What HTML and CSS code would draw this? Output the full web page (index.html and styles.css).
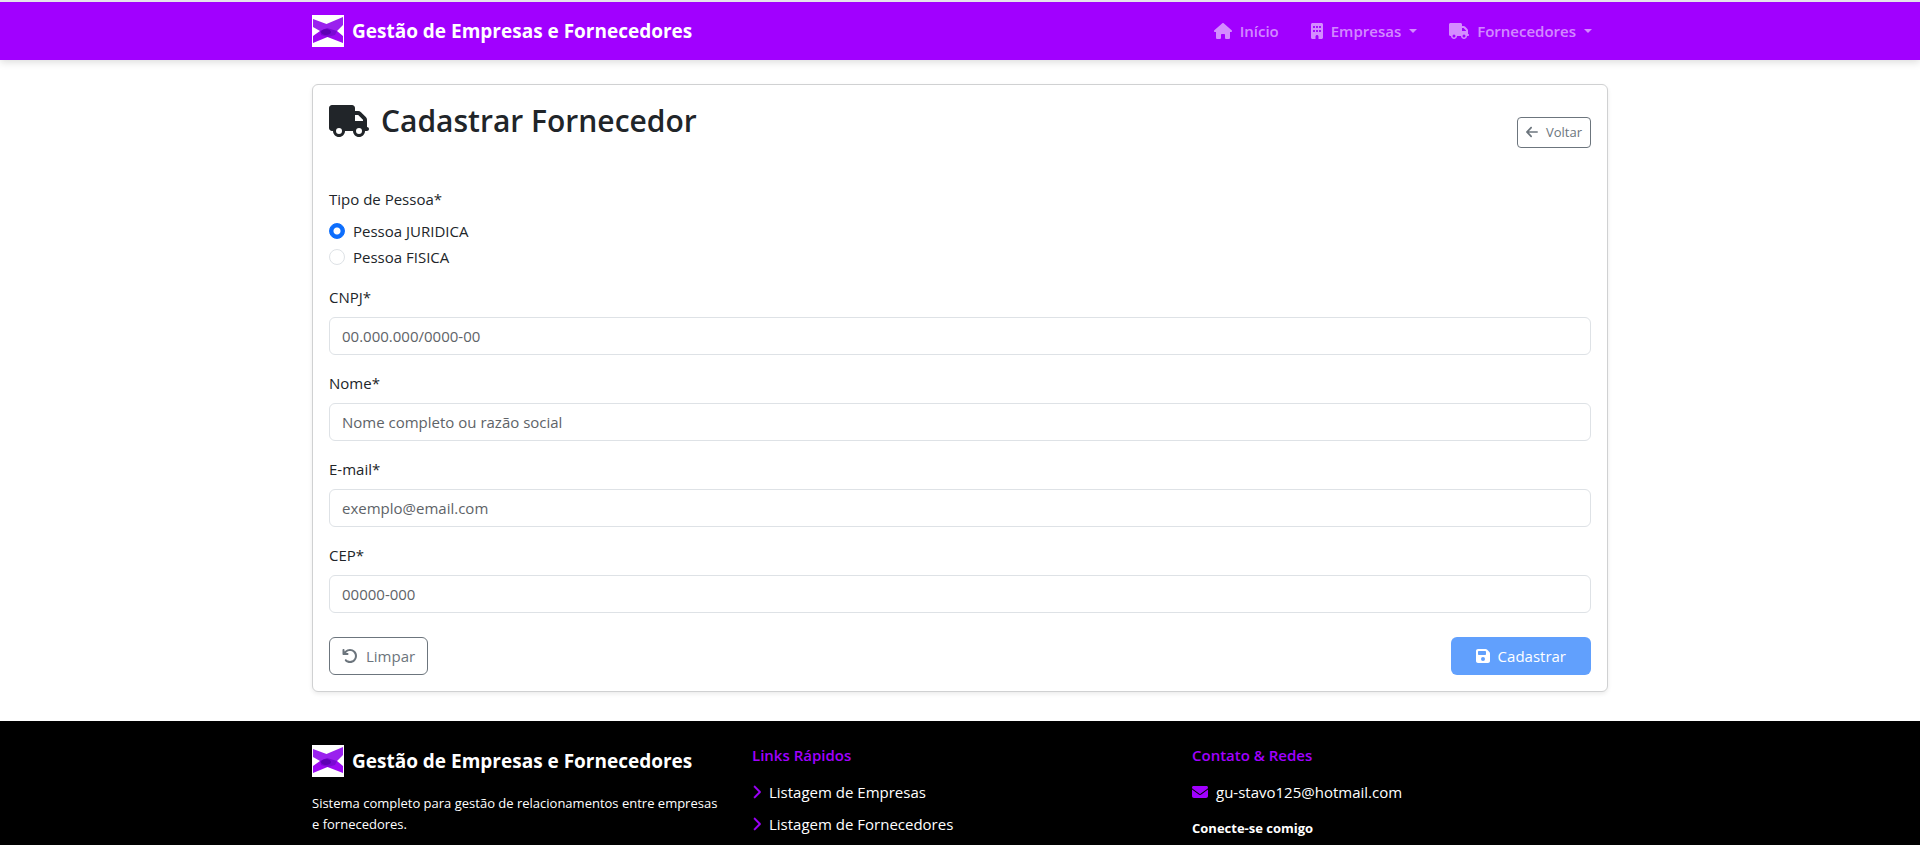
FILE: index.html
```html
<!DOCTYPE html>
<html lang="pt-BR">
<head>
<meta charset="utf-8">
<meta name="viewport" content="width=device-width, initial-scale=1">
<title>Gestão de Empresas e Fornecedores</title>
<link rel="stylesheet" href="styles.css">
</head>
<body>
<svg class="sprite" aria-hidden="true">
  <symbol id="truck" viewBox="0 0 640 512"><path d="M48 0C21.5 0 0 21.5 0 48V368c0 26.5 21.5 48 48 48H64c0 53 43 96 96 96s96-43 96-96H384c0 53 43 96 96 96s96-43 96-96h32c17.7 0 32-14.3 32-32s-14.3-32-32-32V288 256 237.3c0-17-6.7-33.3-18.7-45.3L512 114.7c-12-12-28.3-18.7-45.3-18.7H416V48c0-26.5-21.5-48-48-48H48zM416 160h50.7L544 237.3V256H416V160zM112 416a48 48 0 1 1 96 0 48 48 0 1 1 -96 0zm368-48a48 48 0 1 1 0 96 48 48 0 1 1 0-96z"/></symbol>
  <symbol id="house" viewBox="0 0 576 512"><path d="M575.8 255.5c0 18-15 32.1-32 32.1h-32l.7 160.2c0 2.7-.2 5.4-.5 8.1V472c0 22.1-17.9 40-40 40H456c-1.1 0-2.2 0-3.3-.1c-1.4 .1-2.8 .1-4.2 .1H416 392c-22.1 0-40-17.9-40-40V448 384c0-17.7-14.3-32-32-32H256c-17.7 0-32 14.3-32 32v64 24c0 22.1-17.9 40-40 40H160 128.1c-1.5 0-3-.1-4.5-.2c-1.2 .1-2.4 .2-3.6 .2H104c-22.1 0-40-17.9-40-40V360c0-.9 0-1.9 .1-2.8V287.6H32c-18 0-32-14-32-32.1c0-9 3-17 10-24L266.4 8c7-7 15-8 22-8s15 2 21 7L564.8 231.5c8 7 12 15 11 24z"/></symbol>
  <symbol id="building" viewBox="0 0 384 512"><path d="M48 0C21.5 0 0 21.5 0 48V464c0 26.5 21.5 48 48 48h96V432c0-26.5 21.5-48 48-48s48 21.5 48 48v80h96c26.5 0 48-21.5 48-48V48c0-26.5-21.5-48-48-48H48zM64 240c0-8.8 7.2-16 16-16h32c8.8 0 16 7.2 16 16v32c0 8.8-7.2 16-16 16H80c-8.8 0-16-7.2-16-16V240zm112-16h32c8.8 0 16 7.2 16 16v32c0 8.8-7.2 16-16 16H176c-8.8 0-16-7.2-16-16V240c0-8.8 7.2-16 16-16zm80 16c0-8.8 7.2-16 16-16h32c8.8 0 16 7.2 16 16v32c0 8.8-7.2 16-16 16H272c-8.8 0-16-7.2-16-16V240zM80 96h32c8.8 0 16 7.2 16 16v32c0 8.8-7.2 16-16 16H80c-8.8 0-16-7.2-16-16V112c0-8.8 7.2-16 16-16zm80 16c0-8.8 7.2-16 16-16h32c8.8 0 16 7.2 16 16v32c0 8.8-7.2 16-16 16H176c-8.8 0-16-7.2-16-16V112zM272 96h32c8.8 0 16 7.2 16 16v32c0 8.8-7.2 16-16 16H272c-8.8 0-16-7.2-16-16V112c0-8.8 7.2-16 16-16z"/></symbol>
  <symbol id="arrow-left" viewBox="0 0 448 512"><path d="M9.4 233.4c-12.5 12.5-12.5 32.8 0 45.3l160 160c12.5 12.5 32.8 12.5 45.3 0s12.5-32.8 0-45.3L109.2 288 416 288c17.7 0 32-14.3 32-32s-14.3-32-32-32l-306.7 0L214.6 118.6c12.5-12.5 12.5-32.8 0-45.3s-32.8-12.5-45.3 0l-160 160z"/></symbol>
  <symbol id="undo" viewBox="0 0 512 512"><path d="M125.7 160H176c17.7 0 32 14.3 32 32s-14.3 32-32 32H48c-17.7 0-32-14.3-32-32V64c0-17.7 14.3-32 32-32s32 14.3 32 32v51.2L97.6 97.6c87.5-87.5 229.3-87.5 316.8 0s87.5 229.3 0 316.8s-229.3 87.5-316.8 0c-12.5-12.5-12.5-32.8 0-45.3s32.8-12.5 45.3 0c62.5 62.5 163.8 62.5 226.3 0s62.5-163.8 0-226.3s-163.8-62.5-226.3 0L125.7 160z"/></symbol>
  <symbol id="save" viewBox="0 0 448 512"><path d="M64 32C28.7 32 0 60.7 0 96V416c0 35.3 28.7 64 64 64H384c35.3 0 64-28.7 64-64V173.3c0-17-6.7-33.3-18.7-45.3L352 50.7C340 38.7 323.7 32 306.7 32H64zm0 96c0-17.7 14.3-32 32-32H288c17.7 0 32 14.3 32 32v64c0 17.7-14.3 32-32 32H96c-17.7 0-32-14.3-32-32V128zM224 288a64 64 0 1 1 0 128 64 64 0 1 1 0-128z"/></symbol>
  <symbol id="chevron" viewBox="0 0 320 512"><path stroke="currentColor" stroke-width="16" d="M310.6 233.4c12.5 12.5 12.5 32.8 0 45.3l-192 192c-12.5 12.5-32.8 12.5-45.3 0s-12.5-32.8 0-45.3L242.7 256 73.4 86.6c-12.5-12.5-12.5-32.8 0-45.3s32.8-12.5 45.3 0l192 192z"/></symbol>
  <symbol id="envelope" viewBox="0 0 512 512"><path d="M48 64C21.5 64 0 85.5 0 112c0 15.1 7.1 29.3 19.2 38.4L236.8 313.6c11.4 8.5 27 8.5 38.4 0L492.8 150.4c12.1-9.1 19.2-23.3 19.2-38.4c0-26.5-21.5-48-48-48H48zM0 176V384c0 35.3 28.7 64 64 64H448c35.3 0 64-28.7 64-64V176L294.4 339.2c-22.8 17.1-54 17.1-76.8 0L0 176z"/></symbol>
  <symbol id="logo" viewBox="0 0 32 32">
    <rect width="32" height="32" fill="#fff"/>
    <path d="M1 4 14.500 9 31 2V10L25 16H8L1 12z" fill="#9a22ee"/>
    <path d="M8 16H25L31 21V28L15.500 22 1 28V21z" fill="#9c08f2"/>
    <path d="M8 16 15 13 25 16 23 20 15.500 22 9 20z" fill="#7a08d4"/>
    <ellipse cx="14" cy="17" rx="5" ry="3" fill="#5f02b4"/>
  </symbol>
</svg>

<header class="navbar">
  <div class="container navbar-inner">
    <a class="brand" href="#"><svg class="logo" aria-hidden="true"><use href="#logo"/></svg>Gestão de Empresas e Fornecedores</a>
    <nav class="nav">
      <a class="nav-link" href="#"><svg class="icon icon-house" aria-hidden="true"><use href="#house"/></svg>Início</a>
      <a class="nav-link dropdown" href="#"><svg class="icon icon-building" aria-hidden="true"><use href="#building"/></svg>Empresas</a>
      <a class="nav-link dropdown" href="#"><svg class="icon icon-truck" aria-hidden="true"><use href="#truck"/></svg>Fornecedores</a>
    </nav>
  </div>
</header>

<main class="container main">
  <section class="card">
    <div class="card-head">
      <h1 class="title"><svg class="title-icon" aria-hidden="true"><use href="#truck"/></svg>Cadastrar Fornecedor</h1>
      <a class="btn btn-outline btn-small" href="#"><svg class="icon-small" aria-hidden="true"><use href="#arrow-left"/></svg>Voltar</a>
    </div>
    <form class="form">
      <fieldset class="group">
        <legend class="label">Tipo de Pessoa*</legend>
        <div class="checks">
          <div class="check"><input class="radio" type="radio" name="tipo" id="juridica" checked><label for="juridica">Pessoa JURIDICA</label></div>
          <div class="check"><input class="radio" type="radio" name="tipo" id="fisica"><label for="fisica">Pessoa FISICA</label></div>
        </div>
      </fieldset>
      <div class="group">
        <label class="label" for="cnpj">CNPJ*</label>
        <input class="control" type="text" id="cnpj" placeholder="00.000.000/0000-00">
      </div>
      <div class="group">
        <label class="label" for="nome">Nome*</label>
        <input class="control" type="text" id="nome" placeholder="Nome completo ou razão social">
      </div>
      <div class="group">
        <label class="label" for="email">E-mail*</label>
        <input class="control" type="email" id="email" placeholder="exemplo@email.com">
      </div>
      <div class="group">
        <label class="label" for="cep">CEP*</label>
        <input class="control" type="text" id="cep" placeholder="00000-000">
      </div>
      <div class="actions">
        <button class="btn btn-outline" type="reset"><svg class="icon" aria-hidden="true"><use href="#undo"/></svg>Limpar</button>
        <button class="btn btn-primary" type="submit" disabled><svg class="icon icon-save" aria-hidden="true"><use href="#save"/></svg>Cadastrar</button>
      </div>
    </form>
  </section>
</main>

<footer class="footer">
  <div class="container footer-grid">
    <div class="footer-col">
      <a class="brand" href="#"><svg class="logo" aria-hidden="true"><use href="#logo"/></svg>Gestão de Empresas e Fornecedores</a>
      <p class="about">Sistema completo para gestão de relacionamentos entre empresas e fornecedores.</p>
    </div>
    <div class="footer-col">
      <h2 class="footer-title">Links Rápidos</h2>
      <ul class="links">
        <li><a class="footer-link" href="#"><svg class="icon-chevron" aria-hidden="true"><use href="#chevron"/></svg>Listagem de Empresas</a></li>
        <li><a class="footer-link" href="#"><svg class="icon-chevron" aria-hidden="true"><use href="#chevron"/></svg>Listagem de Fornecedores</a></li>
      </ul>
    </div>
    <div class="footer-col">
      <h2 class="footer-title">Contato &amp; Redes</h2>
      <a class="footer-link" href="mailto:gu-stavo125@hotmail.com"><svg class="icon" aria-hidden="true"><use href="#envelope"/></svg>gu-stavo125@hotmail.com</a>
      <h3 class="social">Conecte-se comigo</h3>
    </div>
  </div>
</footer>
</body>
</html>
```
FILE: styles.css
```css
*, *::before, *::after { box-sizing: border-box; }

body {
  display: flex;
  flex-direction: column;
  min-height: 100vh;
  margin: 0;
  background: #fff;
  color: #212529;
  font: 15px/24px "Segoe UI", "Open Sans", "Noto Sans", sans-serif;
}

a { color: inherit; text-decoration: none; }
svg { flex: none; fill: currentColor; }
.sprite { display: none; }

.container {
  width: 100%;
  max-width: 1320px;
  margin: 0 auto;
  padding: 0 12px;
}

.navbar {
  border-top: 2px solid #e4e4ea;
  background: #a100ff;
  box-shadow: 0 2px 8px rgba(0, 0, 0, .15);
}
.navbar-inner {
  display: flex;
  align-items: center;
  justify-content: space-between;
  min-height: 58px;
}
.brand {
  display: flex;
  align-items: center;
  gap: 8px;
  color: #fff;
  font-size: 19px;
  font-weight: 700;
  line-height: 32px;
  white-space: nowrap;
}
.logo { width: 32px; height: 32px; }
.nav { display: flex; }
.nav-link {
  display: flex;
  align-items: center;
  gap: 8px;
  padding: 8px 16px;
  color: rgba(255, 255, 255, .55);
  font-weight: 600;
}
.dropdown::after {
  content: "";
  border: 4px solid transparent;
  border-top-color: currentColor;
  border-bottom: 0;
}

.icon { width: 16px; height: 16px; }
.icon-house { width: 18px; }
.icon-building { width: 12px; }
.icon-truck { width: 20px; }
.icon-save { width: 14px; }
.icon-small { width: 12px; height: 14px; }
.icon-chevron { width: 9px; height: 14px; }

.main { padding-top: 24px; padding-bottom: 29px; }
.card {
  padding: 16px;
  border: 1px solid #d0d1d2;
  border-radius: 6px;
  background: #fff;
  box-shadow: 0 2px 4px rgba(0, 0, 0, .08);
}
.card-head {
  display: flex;
  align-items: center;
  justify-content: space-between;
  min-height: 62px;
  margin-bottom: 24px;
}
.title {
  display: flex;
  align-items: center;
  align-self: flex-start;
  gap: 12px;
  margin: 0;
  font-size: 30px;
  font-weight: 600;
  line-height: 40px;
}
.title-icon { width: 40px; height: 32px; }

.btn {
  display: inline-flex;
  align-items: center;
  justify-content: center;
  gap: 8px;
  min-height: 38px;
  padding: 6px 12px;
  border: 1px solid transparent;
  border-radius: 6px;
  font: inherit;
}
.btn-outline { border-color: #6c757d; background: #fff; color: #6c757d; }
.btn-small {
  min-height: 31px;
  padding: 4px 8px;
  border-radius: 4px;
  font-size: 13px;
  line-height: 21px;
}
.btn-primary { padding: 6px 24px; background: #0d6efd; color: #fff; opacity: .65; }

.group { margin: 0 0 16px; padding: 0; border: 0; }
.label { display: block; margin-bottom: 8px; padding: 0; }
.checks { display: grid; gap: 2px; }
.check { display: flex; gap: 8px; }
.radio {
  appearance: none;
  width: 16px;
  height: 16px;
  margin: 4px 0 0;
  border: 1px solid #dee2e6;
  border-radius: 50%;
  background: #fff;
}
.radio:checked {
  border-color: #0d6efd;
  background: radial-gradient(circle, #fff 3px, #0d6efd 4px);
}
.control {
  display: block;
  width: 100%;
  height: 38px;
  padding: 6px 12px;
  border: 1px solid #dee2e6;
  border-radius: 6px;
  background: #fff;
  color: #212529;
  font: inherit;
}
.control::placeholder { color: #5e6368; opacity: 1; }
.actions { display: flex; justify-content: space-between; padding-top: 8px; }

.footer { flex: 1; background: #000; color: #fff; }
.footer-grid {
  display: grid;
  grid-template-columns: repeat(3, 1fr);
  gap: 24px;
  padding-top: 24px;
}
.about { margin: 16px 0 0; font-size: 13px; line-height: 21px; }
.footer-title {
  margin: 0 0 15px;
  color: #a100ff;
  font-size: 15px;
  font-weight: 600;
  line-height: 20px;
}
.links { display: grid; gap: 8px; margin: 0; padding: 0; list-style: none; }
.footer-link { display: flex; align-items: center; gap: 8px; }
.footer-link svg { color: #a100ff; }
.social { margin: 14px 0 0; font-size: 13px; font-weight: 700; line-height: 20px; }
```
